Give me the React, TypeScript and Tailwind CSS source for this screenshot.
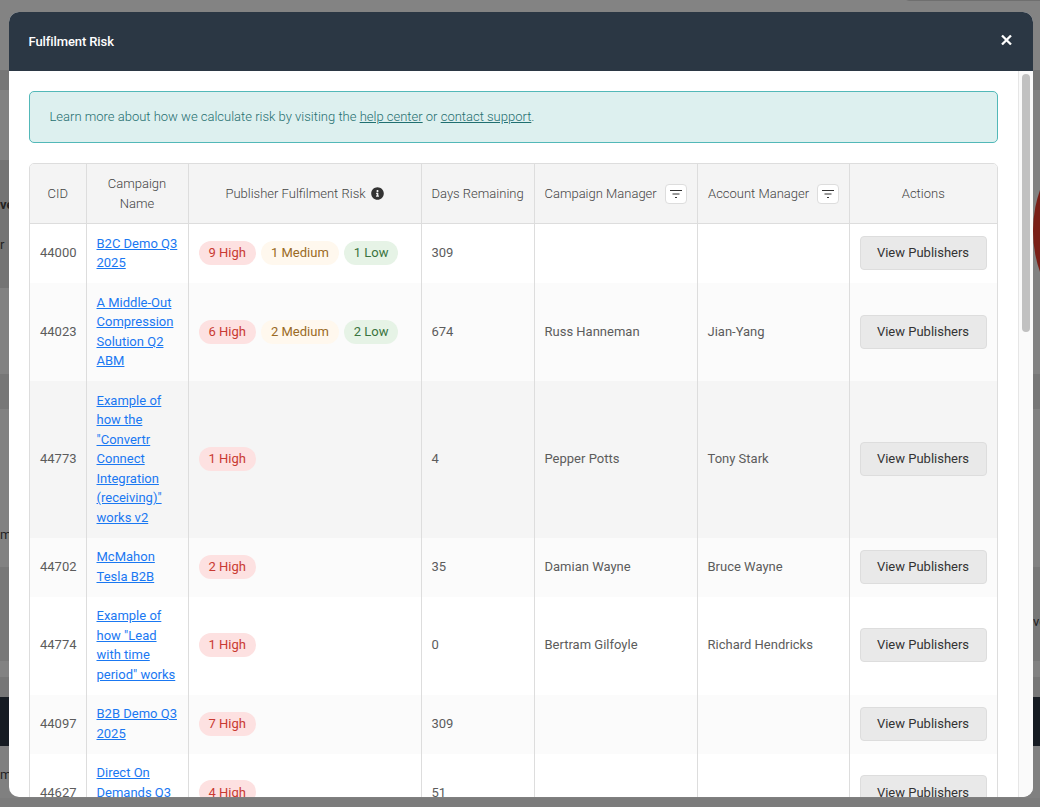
import React from "react";
import { FaInfoCircle } from "react-icons/fa";

type Row = { cid: string; name: string; risk: [string, number][]; days: string; cm: string; am: string; bg: string };

const rows: Row[] = [
  { cid: "44000", name: "B2C Demo Q3 2025", risk: [["h", 9], ["m", 1], ["l", 1]], days: "309", cm: "", am: "", bg: "bg-white" },
  { cid: "44023", name: "A Middle-Out Compression Solution Q2 ABM", risk: [["h", 6], ["m", 2], ["l", 2]], days: "674", cm: "Russ Hanneman", am: "Jian-Yang", bg: "bg-[#fbfbfb]" },
  { cid: "44773", name: 'Example of how the "Convertr Connect Integration (receiving)" works v2', risk: [["h", 1]], days: "4", cm: "Pepper Potts", am: "Tony Stark", bg: "bg-[#f5f5f5]" },
  { cid: "44702", name: "McMahon Tesla B2B", risk: [["h", 2]], days: "35", cm: "Damian Wayne", am: "Bruce Wayne", bg: "bg-[#fbfbfb]" },
  { cid: "44774", name: 'Example of how "Lead with time period" works', risk: [["h", 1]], days: "0", cm: "Bertram Gilfoyle", am: "Richard Hendricks", bg: "bg-white" },
  { cid: "44097", name: "B2B Demo Q3 2025", risk: [["h", 7]], days: "309", cm: "", am: "", bg: "bg-[#fbfbfb]" },
  { cid: "44627", name: "Direct On Demands Q3 2025", risk: [["h", 4]], days: "51", cm: "", am: "", bg: "bg-white" },
];

function Pill({ kind, n }: { kind: string; n: number }) {
  if (kind === "h") return <span className="inline-flex h-6 items-center rounded-full bg-[#fde1e1] px-[10px] text-[#c93a32]">{n} High</span>;
  if (kind === "m") return <span className="inline-flex h-6 items-center rounded-full bg-[#fff8ee] px-[10px] text-[#9a6a24]">{n} Medium</span>;
  return <span className="inline-flex h-6 items-center rounded-full bg-[#e6f3e6] pl-[10px] pr-[9px] text-[#3a7440]">{n} Low</span>;
}

function FilterButton() {
  return (
    <span className="flex h-5 w-[22px] shrink-0 items-center justify-center rounded-[4px] border border-[#dddddd] bg-white">
      <svg width="12" height="10" viewBox="0 0 12 10" fill="none" stroke="#333333" strokeWidth="1.1">
        <path d="M0 1.5H12M2.5 5H9.5M5 8.5H7" />
      </svg>
    </span>
  );
}

function Strip({ h, bg, left, right, leftBg, bold }: { h: string; bg: string; left?: string; right?: string; leftBg?: string; bold?: boolean }) {
  return (
    <div className={`flex shrink-0 items-center justify-between overflow-hidden text-[13px] text-[#222222] ${h} ${bg}`}>
      <span className={`flex h-full w-[9px] items-center overflow-hidden whitespace-nowrap ${leftBg ?? ""} ${bold ? "font-bold" : ""}`}>{left}</span>
      <span className="flex h-full w-[7px] items-center overflow-hidden whitespace-nowrap">{right}</span>
    </div>
  );
}

export default function App() {
  return (
    <div className="relative h-[807px] w-[1040px] overflow-hidden bg-[#828282] font-['Roboto',sans-serif]">
      <div className="flex h-full flex-col">
        <Strip h="h-[70px]" bg="bg-[#838383]" />
        <Strip h="h-5" bg="bg-[#777777]" />
        <Strip h="h-[70px]" bg="bg-[#828282]" />
        <Strip h="h-[35px]" bg="bg-[#828282]" leftBg="bg-[#747474]" />
        <Strip h="h-5" bg="bg-[#828282]" leftBg="bg-[#747474]" left="ve" bold />
        <Strip h="h-5" bg="bg-[#828282]" leftBg="bg-[#747474]" />
        <Strip h="h-5" bg="bg-[#828282]" leftBg="bg-[#747474]" left="r" />
        <Strip h="h-[33px]" bg="bg-[#828282]" leftBg="bg-[#747474]" />
        <Strip h="h-[86px]" bg="bg-[#828282]" />
        <Strip h="h-[35px]" bg="bg-[#777777]" />
        <Strip h="h-[116px]" bg="bg-[#828282]" />
        <Strip h="h-5" bg="bg-[#828282]" left="m" />
        <Strip h="h-[22px]" bg="bg-[#828282]" />
        <Strip h="h-[45px]" bg="bg-[#787878]" />
        <Strip h="h-5" bg="bg-[#787878]" right="ve" />
        <Strip h="h-[29px]" bg="bg-[#787878]" />
        <Strip h="h-4" bg="bg-[#828282]" />
        <Strip h="h-5" bg="bg-[#777777]" />
        <Strip h="h-[49px]" bg="bg-[#161b22]" />
        <Strip h="h-[19px]" bg="bg-[#808080]" />
        <Strip h="h-5" bg="bg-[#808080]" left="mp" />
        <Strip h="h-[13px]" bg="bg-[#808080]" />
        <Strip h="h-[9px]" bg="bg-[#7c7c7c]" />
      </div>

      <div className="absolute left-[1033px] top-[108px] h-[246px] w-[246px] rounded-full bg-[#7a1f17]" />
      <div className="absolute left-[905px] top-[-8px] h-[9px] w-[200px] rounded-[4px] border border-[#6f6f6f]" />

      <div className="absolute left-[9px] top-3 flex h-[785px] w-[1024px] flex-col overflow-hidden rounded-[10px] bg-white">
        <div className="flex h-[59px] shrink-0 items-center justify-between bg-[#2b3744] pl-[19.5px] pr-[21px]">
          <h2 className="text-[13px] font-medium tracking-[-0.1px] text-white">Fulfilment Risk</h2>
          <svg width="11" height="11" viewBox="0 0 11 11" stroke="#ffffff" strokeWidth="2.3" className="-translate-y-[1.5px]">
            <path d="M1 1L10 10M10 1L1 10" />
          </svg>
        </div>

        <div className="flex min-h-0 flex-1">
          <div className="min-w-0 flex-1 overflow-hidden p-5">
            <div className="mb-5 flex h-[52px] items-center rounded-[5px] border border-[#52b8b8] bg-[#ddf0ef] pl-[19.5px] pr-5 text-[13px] font-light text-[#1f6f70]">
              <p>
                Learn more about how we calculate risk by visiting the <a className="underline">help center</a> or <a className="underline">contact support</a>.
              </p>
            </div>

            <div className="overflow-hidden rounded-t-[5px] border border-[#dddddd]">
              <table className="w-[967px] table-fixed border-collapse text-[13px] leading-[19.5px] text-[#5c5c5c]">
                <colgroup>
                  <col className="w-14" />
                  <col className="w-[102px]" />
                  <col className="w-[233px]" />
                  <col className="w-[113px]" />
                  <col className="w-[163px]" />
                  <col className="w-[152px]" />
                  <col className="w-[148px]" />
                </colgroup>
                <thead>
                  <tr className="h-[59px] border-b border-[#dddddd] bg-[#f4f4f4] font-light text-[#444444]">
                    <th className="p-[10px] text-center font-light">CID</th>
                    <th className="border-l border-[#dddddd] p-[10px] text-center font-light">Campaign Name</th>
                    <th className="border-l border-[#dddddd] p-[10px] font-light">
                      <span className="flex items-center justify-center gap-[5px]">
                        Publisher Fulfilment Risk
                        <FaInfoCircle className="h-[13px] w-[13px] text-[#333333]" />
                      </span>
                    </th>
                    <th className="whitespace-nowrap border-l border-[#dddddd] p-[10px] text-left font-light">Days Remaining</th>
                    <th className="border-l border-[#dddddd] p-[10px] font-light">
                      <span className="flex items-center justify-between whitespace-nowrap">Campaign Manager <FilterButton /></span>
                    </th>
                    <th className="border-l border-[#dddddd] py-[10px] pl-[10.5px] pr-[10px] font-light">
                      <span className="flex items-center justify-between whitespace-nowrap">Account Manager <FilterButton /></span>
                    </th>
                    <th className="border-l border-[#dddddd] p-[10px] text-center font-light">Actions</th>
                  </tr>
                </thead>
                <tbody>
                  {rows.map((r) => (
                    <tr key={r.cid} className={r.bg}>
                      <td className="px-[10px] pb-[10.5px] pt-[9.5px] text-center">{r.cid}</td>
                      <td className="border-l border-[#dddddd] px-[10px] pb-[10.5px] pt-[9.5px]">
                        <a className="text-[#1a78f2] underline">{r.name}</a>
                      </td>
                      <td className="border-l border-[#dddddd] px-[10px] pb-[10.5px] pt-[9.5px]">
                        <span className="flex gap-[5px]">
                          {r.risk.map(([k, n]) => (
                            <Pill key={k} kind={k} n={n} />
                          ))}
                        </span>
                      </td>
                      <td className="border-l border-[#dddddd] px-[10px] pb-[10.5px] pt-[9.5px]">{r.days}</td>
                      <td className="border-l border-[#dddddd] px-[10px] pb-[10.5px] pt-[9.5px]">{r.cm}</td>
                      <td className="border-l border-[#dddddd] px-[10px] pb-[10.5px] pt-[9.5px]">{r.am}</td>
                      <td className="border-l border-[#dddddd] px-[10px] pb-[10.5px] pt-[9.5px]">
                        <button className="h-[34px] w-[127px] rounded-[4px] border border-[#dddddd] bg-[#e9e9e9] font-normal text-[#333333]">View Publishers</button>
                      </td>
                    </tr>
                  ))}
                </tbody>
              </table>
            </div>
          </div>

          <div className="w-[15px] shrink-0 border-l border-[#e6e6e6] bg-[#fafafa] pl-[3px] pt-[3px]">
            <div className="h-[258px] w-2 rounded-full bg-[#c1c1c1]" />
          </div>
        </div>
      </div>
    </div>
  );
}
